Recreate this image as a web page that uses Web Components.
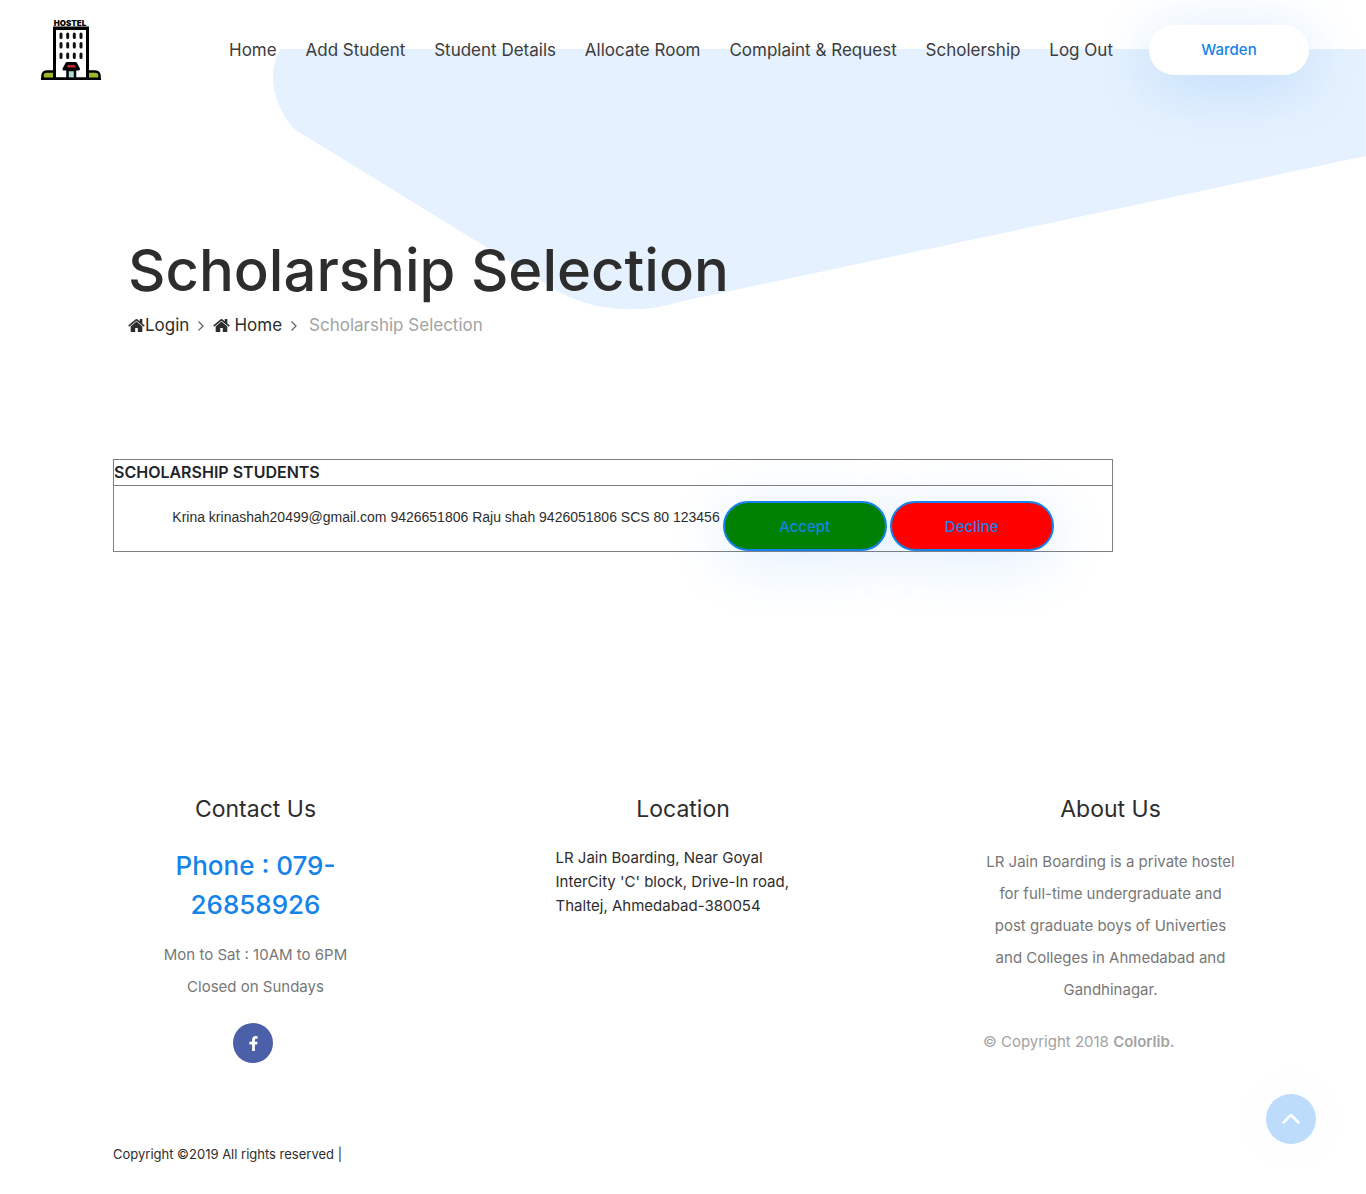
<!DOCTYPE html>
<html lang="en">
<head>
<meta charset="utf-8">
<meta name="viewport" content="width=device-width, initial-scale=1">
<title>Scholarship Selection</title>
<style>
:root{--ink:#2d2d2d;--muted:#777;--pale:#a3a3a3;--brand:#1583e9;--tint:#e5f1fe;--glow:0 10px 60px rgba(21,131,233,.2)}
body{margin:0;background:#fff;color:var(--ink);font-family:Inter,"Liberation Sans",sans-serif;font-size:15px;line-height:24px}
</style>
</head>
<body>
<hostel-page>
  <site-header slot="header">
    <nav-link href="#home">Home</nav-link>
    <nav-link href="#add">Add Student</nav-link>
    <nav-link href="#details">Student Details</nav-link>
    <nav-link href="#allocate">Allocate Room</nav-link>
    <nav-link href="#complaint">Complaint &amp; Request</nav-link>
    <nav-link href="#scholarship">Scholership</nav-link>
    <nav-link href="#logout">Log Out</nav-link>
  </site-header>
  <page-banner heading="Scholarship Selection"></page-banner>
  <student-table heading="SCHOLARSHIP STUDENTS">
    <student-entry>Krina krinashah20499@gmail.com 9426651806 Raju shah 9426051806 SCS 80 123456</student-entry>
  </student-table>
  <site-footer slot="footer"></site-footer>
</hostel-page>
<scroll-top></scroll-top>
<script>
const define = (name, render) => customElements.define(name, class extends HTMLElement {
  constructor() { super(); this.attachShadow({ mode: 'open' }); }
  connectedCallback() { this.shadowRoot.innerHTML = render(this); }
});

const house = `<svg class="house" viewBox="64 253 1664 1283" aria-hidden="true"><path fill="currentColor" d="M1472 992v480q0 26-19 45t-45 19h-384v-384h-256v384h-384q-26 0-45-19t-19-45v-480q0-1 .5-3t.5-3l575-474 575 474q1 2 1 6zm223-69l-62 74q-8 9-21 11h-3q-13 0-21-7l-692-577-692 577q-12 8-24 7-13-2-21-11l-62-74q-8-10-7-23.5t11-21.5l719-599q32-26 76-26t76 26l244 204v-195q0-14 9-23t23-9h192q14 0 23 9t9 23v408l219 182q10 8 11 21.5t-7 23.5z"/></svg>`;
const chevron = `<svg class="chevron" viewBox="0 0 8 12" aria-hidden="true"><path d="M1.5 1.5 6 6l-4.500 4.500" fill="none" stroke="#666" stroke-width="1.300"/></svg>`;

define('hostel-page', () => `
<style>
:host{display:flex;flex-direction:column;position:relative;isolation:isolate}
.shape{position:absolute;z-index:-1;top:49px;right:0;width:80%;height:auto}
main{box-sizing:border-box;width:100%;max-width:1140px;margin:0 auto;padding-bottom:243px}
</style>
<svg class="shape" viewBox="0 0 1093 263" aria-hidden="true"><path fill="#e5f1fe" d="M8 0H1093V107L406 253C366 265 325 263 286 243L39 91L21 80C3 60-6 30 4 7Q5 3 8 0Z"/></svg>
<slot name="header"></slot>
<main><slot></slot></main>
<slot name="footer"></slot>`);

define('hostel-logo', () => `
<style>:host{display:block;flex:none}a,svg{display:block}svg{width:60px;height:64px;margin-top:-4px}</style>
<a href="#home" aria-label="Hostel home"><svg viewBox="0 -4 60 64">
<rect x="1.500" y="51.500" width="14" height="9" rx="4" fill="#a2b52b" stroke="#000" stroke-width="2.500"/>
<rect x="44.500" y="51.500" width="14" height="9" rx="4" fill="#a2b52b" stroke="#000" stroke-width="2.500"/>
<path d="M13.500 59V8.500h33V59Z" fill="#fff" stroke="#000" stroke-width="3"/>
<path d="M12 8.200h36" stroke="#000" stroke-width="3.200"/>
<g stroke="#111" stroke-width="3" stroke-linecap="round"><path d="M20 14v3.500M26.700 14v3.500M33.300 14v3.500M40 14v3.500M20 23.500V27M26.700 23.500V27M33.300 23.500V27M40 23.500V27M20 34v3.500M26.700 34v3.500M33.300 34v3.500M40 34v3.500"/></g>
<path d="M26.500 50v9h7.500v-9Z" fill="#a9dcd3" stroke="#000" stroke-width="2.500"/>
<path d="M26 43.500h8.500L37.500 49H23Z" fill="#c5262b" stroke="#000" stroke-width="3" stroke-linejoin="round"/>
<path d="M0 58.800h60" stroke="#000" stroke-width="2.400"/>
<text x="29" y="6" text-anchor="middle" font-family="Inter,sans-serif" font-size="8" font-weight="900" fill="#000">HOSTEL</text>
</svg></a>`);

define('nav-link', el => `
<style>:host{display:block}a{display:block;color:#3c3c3c;text-decoration:none;font-size:17px;font-weight:400;line-height:26px;white-space:nowrap}</style>
<a href="${el.getAttribute('href')}"><slot></slot></a>`);

define('site-header', () => `
<style>
:host{display:flex;align-items:center;box-sizing:border-box;min-height:100px;padding:0 57px 0 41px}
nav{flex:1;display:flex;justify-content:space-between;gap:12px;margin:0 36px 0 128px}
.user{flex:none;width:160px;border-radius:25px;background:#fff;color:var(--brand);box-shadow:var(--glow);font-weight:500;line-height:50px;text-align:center;text-decoration:none}
</style>
<hostel-logo></hostel-logo><nav><slot></slot></nav><a class="user" href="#warden">Warden</a>`);

define('page-banner', el => `
<style>
:host{display:block;padding:134px 15px 120px}
h1{margin:0;font-size:58px;font-weight:500;line-height:72px}
ol{display:flex;align-items:center;list-style:none;margin:6px 0 0;padding:0;font-size:17px;line-height:27px}
li{display:flex;align-items:center}
a{display:flex;align-items:center;color:var(--ink);text-decoration:none}
.spaced{gap:4px}
.house{width:17px;height:13px}
.chevron{width:8px;height:12px;margin:0 8px}
.current{margin-left:3px;color:var(--pale)}
</style>
<h1>${el.getAttribute('heading')}</h1>
<ol><li><a href="#login">${house}Login</a>${chevron}</li><li><a class="spaced" href="#home">${house}Home</a>${chevron}</li><li class="current">Scholarship Selection</li></ol>`);

define('pill-button', () => `
<style>
:host{display:block}
button{box-sizing:border-box;display:block;width:164px;height:50px;padding:0;border:2px solid var(--brand);border-radius:25px;background:var(--fill);color:var(--brand);box-shadow:0 10px 60px rgba(21,131,233,.15);font:500 15px Inter,"Liberation Sans",sans-serif;cursor:pointer}
</style><button type="button"><slot></slot></button>`);

define('student-entry', () => `
<style>
:host{display:flex;flex-wrap:wrap;justify-content:center;gap:3px;padding-top:15px;font-family:"Liberation Sans",sans-serif;font-size:14px;line-height:32px}
.accept{--fill:green}.decline{--fill:red}
</style>
<span><slot></slot></span><pill-button class="accept">Accept</pill-button><pill-button class="decline">Decline</pill-button>`);

define('student-table', el => `
<style>
:host{display:block}
table{width:1000px;max-width:100%;border-collapse:collapse}
th,td{padding:0;border:1px solid gray}
th{color:#212529;font-size:16px;font-weight:600;line-height:25px;text-align:left}
</style>
<table><thead><tr><th scope="col">${el.getAttribute('heading')}</th></tr></thead><tbody><tr><td><slot></slot></td></tr></tbody></table>`);

define('footer-column', el => `
<style>
:host{display:block;box-sizing:border-box;flex:0 1 285px;padding:0 15px}
h2{margin:0 0 23px;font-size:23px;font-weight:400;line-height:28px;text-align:center}
</style><h2>${el.getAttribute('heading')}</h2><slot></slot>`);

define('site-footer', () => `
<style>
:host{display:block;box-sizing:border-box;width:100%;max-width:1140px;margin:0 auto;padding-bottom:28px}
.columns{display:flex;justify-content:space-between;min-height:347px}
p{margin:0}
.phone{color:var(--brand);font-size:26px;font-weight:500;line-height:39px;text-align:center;margin:0 0 15px}
.copy{color:var(--muted);line-height:32px;text-align:center}
.rights{color:var(--pale);line-height:32px;margin-top:20px}
.rights b{font-weight:600}
.social{display:flex;justify-content:center;margin-top:20px}
.social a{display:grid;place-items:center;width:40px;height:40px;margin-right:5px;border-radius:50%;background:#4c5fa9}
.social svg{width:9px;height:15px}
.legal{font-size:13px}
</style>
<div class="columns">
<footer-column heading="Contact Us"><h3 class="phone">Phone : 079-<br>26858926</h3><p class="copy">Mon to Sat : 10AM to 6PM<br>Closed on Sundays</p>
<div class="social"><a href="#facebook" aria-label="Facebook"><svg viewBox="0 0 9 15"><path fill="#fff" d="M8.600.200V2.700H7.200Q5.900 2.700 5.900 3.900V5.700H8.500L8.100 8.400H5.900V15H3.100V8.400H.400V5.700H3.100V3.600C3.100 1.300 4.500 0 6.600 0Q7.900 0 8.600.200Z"/></svg></a></div></footer-column>
<footer-column heading="Location"><p>LR Jain Boarding, Near Goyal<br>InterCity 'C' block, Drive-In road,<br>Thaltej, Ahmedabad-380054</p></footer-column>
<footer-column heading="About Us"><p class="copy">LR Jain Boarding is a private hostel<br>for full-time undergraduate and<br>post graduate boys of Univerties<br>and Colleges in Ahmedabad and<br>Gandhinagar.</p><p class="rights">© Copyright 2018 <b>Colorlib.</b></p></footer-column>
</div>
<p class="legal">Copyright ©2019 All rights reserved |</p>`);

define('scroll-top', () => `
<style>
:host{position:fixed;right:50px;bottom:50px}
button{display:grid;place-items:center;width:50px;height:50px;padding:0;border:0;border-radius:50%;background:#bddbfa;box-shadow:0 0 60px rgba(21,131,233,.04);cursor:pointer}
svg{width:20px;height:12px}
</style><button type="button" aria-label="Back to top"><svg viewBox="0 0 20 12"><path d="M2.500 9.500 10 2l7.500 7.500" fill="none" stroke="#fff" stroke-width="2.600" stroke-linecap="round" stroke-linejoin="round"/></svg></button>`);
</script>
</body>
</html>
